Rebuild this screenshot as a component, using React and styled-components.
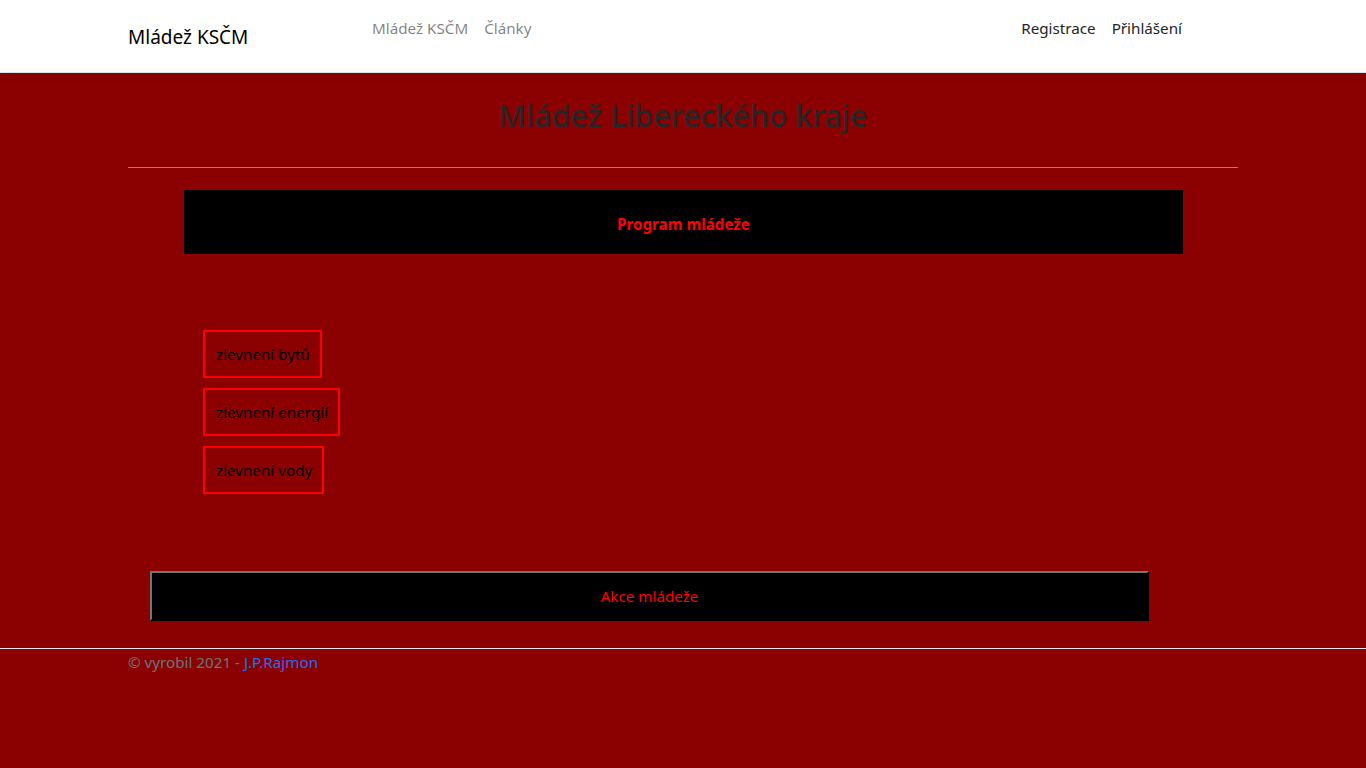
import styled, { createGlobalStyle } from "styled-components";

const GlobalStyle = createGlobalStyle`
  html, body {
    margin: 0;
    background-color: #8b0000;
    font-family: "Noto Sans", "Open Sans", sans-serif;
    font-size: 15.2px;
    color: #212529;
  }
`;

const Header = styled.header`
  background-color: #fff;
  border-bottom: 1px solid #dee2e6;
  box-shadow: 0 0.25rem 0.75rem rgba(0, 0, 0, 0.05);
  height: 73px;
  box-sizing: border-box;
`;

const Container = styled.div`
  width: 1110px;
  margin: 0 auto;
`;

const NavBar = styled(Container)`
  display: flex;
  align-items: flex-start;
  height: 100%;
`;

const Brand = styled.a`
  font-size: 19px;
  color: #000;
  text-decoration: none;
  margin-top: 24px;
  width: 244px;
  line-height: 26px;
`;

const NavList = styled.nav`
  display: flex;
  gap: 16px;
  margin-top: 16px;
  flex: ${({ grow }) => (grow ? 1 : "none")};
  padding-right: ${({ right }) => (right ? "56px" : "0")};
`;

const NavLink = styled.a`
  color: ${({ dark }) => (dark ? "#212529" : "rgba(0,0,0,0.5)")};
  text-decoration: none;
  line-height: 24px;
`;

const Main = styled(Container)`
  padding-bottom: 27px;
`;

const Title = styled.h1`
  margin: 0;
  padding-top: 24px;
  text-align: center;
  font-size: 30.4px;
  font-weight: 500;
  line-height: 38px;
  color: #262626;
`;

const Rule = styled.hr`
  margin: 32px 0 22px;
  border: 0;
  border-top: 1px solid rgba(255, 255, 255, 0.45);
`;

const Banner = styled.div`
  margin: 0 55px 0 56px;
  height: 64px;
  background: #000;
  color: #ff0000;
  font-weight: 700;
  display: flex;
  align-items: center;
  justify-content: center;
  padding-top: 4px;
  box-sizing: border-box;
`;

const Items = styled.ul`
  list-style: none;
  margin: 76px 0 0 75px;
  padding: 0;
  display: flex;
  flex-direction: column;
  align-items: flex-start;
  gap: 10px;
`;

const Item = styled.li`
  border: 2px solid #ff0000;
  padding: 0 10px 0 11px;
  height: 48px;
  box-sizing: border-box;
  display: flex;
  align-items: center;
  color: #000;
`;

const ActionButton = styled.button`
  display: block;
  margin: 77px 0 0 22px;
  width: 999px;
  height: 50px;
  background: #000;
  color: #ff0000;
  font: inherit;
  border: 2px outset #767676;
  border-color: #767676 #2b2b2b #2b2b2b #767676;
`;

const Footer = styled.footer`
  border-top: 1px solid #e5e5e5;
`;

const FooterText = styled(Container)`
  color: #6c757d;
  line-height: 24px;
  padding-top: 1px;
`;

const FooterLink = styled.a`
  color: #1b6ef3;
  text-decoration: none;
`;

export default function App() {
  return (
    <>
      <GlobalStyle />
      <Header>
        <NavBar>
          <Brand href="#">Mládež KSČM</Brand>
          <NavList grow>
            <NavLink href="#">Mládež KSČM</NavLink>
            <NavLink href="#">Články</NavLink>
          </NavList>
          <NavList right>
            <NavLink dark href="#">Registrace</NavLink>
            <NavLink dark href="#">Přihlášení</NavLink>
          </NavList>
        </NavBar>
      </Header>
      <Main>
        <Title>Mládež Libereckého kraje</Title>
        <Rule />
        <Banner>Program mládeže</Banner>
        <Items>
          <Item>zlevnení bytů</Item>
          <Item>zlevnení energií</Item>
          <Item>zlevnení vody</Item>
        </Items>
        <ActionButton>Akce mládeže</ActionButton>
      </Main>
      <Footer>
        <FooterText>
          © vyrobil 2021 - <FooterLink href="#">J.P.Rajmon</FooterLink>
        </FooterText>
      </Footer>
    </>
  );
}
